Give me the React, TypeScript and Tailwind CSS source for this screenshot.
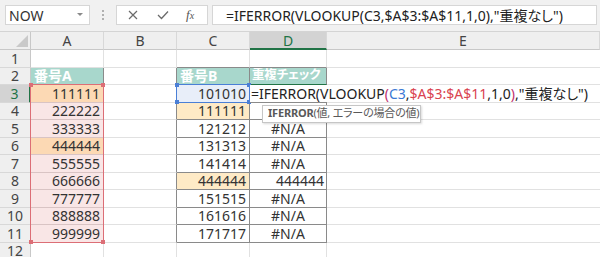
import React from "react";

const A_VALS = ["111111", "222222", "333333", "444444", "555555", "666666", "777777", "888888", "999999"];
const C_VALS = ["101010", "111111", "121212", "131313", "141414", "444444", "151515", "161616", "171717"];

function RowHead({ n }: { n: number }) {
  const active = n === 3;
  return (
    <div
      className={
        "flex items-center justify-center border-b border-[#d8d8d8] text-[14px] " +
        (active
          ? "bg-[#d3d3d3] text-[#217346] border-r-2 border-r-[#217346]"
          : "bg-[#efefef] text-[#444] border-r border-r-[#c8c8c8]")
      }
    >
      {n}
    </div>
  );
}

function ColHead({ label, active }: { label: string; active?: boolean }) {
  return (
    <div
      className={
        "flex items-center justify-center border-r border-[#d8d8d8] text-[14px] " +
        (active
          ? "bg-[#d3d3d3] text-[#217346] border-b-2 border-b-[#217346]"
          : "bg-[#efefef] text-[#444] border-b border-b-[#c8c8c8]")
      }
    >
      {label}
    </div>
  );
}

function Corner({ className }: { className: string }) {
  return <div className={"absolute w-[4px] h-[4px] " + className} />;
}

export default function App() {
  const rows: React.ReactNode[] = [];
  for (let r = 1; r <= 12; r++) {
    rows.push(<RowHead key={"h" + r} n={r} />);
    // Column A
    if (r === 2) {
      rows.push(
        <div key={"a" + r} className="flex items-center pl-[3px] bg-[#a8d7cc] text-white font-bold text-[14px] border-r border-r-[#8a8a8a] border-b border-b-[#e1e1e1]">
          番号A
        </div>
      );
    } else if (r >= 3 && r <= 11) {
      const orange = r === 3 || r === 6;
      rows.push(
        <div
          key={"a" + r}
          className={
            "flex items-center justify-end pr-[3px] text-[14px] text-[#333] border-r border-b border-[#d9c4c4] " +
            (orange ? "bg-[#fcd9b4]" : "bg-[#f9e6e6]") +
            (r === 3 ? " relative z-10" : "")
          }
        >
          {A_VALS[r - 3]}
          {r === 3 && (
            <div className="absolute -left-px -top-px -right-px h-[158.5px] border border-[#dc6e76] pointer-events-none">
              <Corner className="-left-[2px] -top-[2px] bg-[#dc6e76]" />
              <Corner className="-right-[2px] -top-[2px] bg-[#dc6e76]" />
              <Corner className="-left-[2px] -bottom-[2px] bg-[#dc6e76]" />
              <Corner className="-right-[2px] -bottom-[2px] bg-[#dc6e76]" />
            </div>
          )}
        </div>
      );
    } else {
      rows.push(<div key={"a" + r} className="border-r border-b border-[#e1e1e1] bg-white" />);
    }
    // Column B
    rows.push(
      <div
        key={"b" + r}
        className={
          "bg-white border-b border-b-[#e1e1e1] border-r " +
          (r >= 2 && r <= 11 ? "border-r-[#8a8a8a]" : "border-r-[#e1e1e1]")
        }
      />
    );
    // Column C
    if (r === 2) {
      rows.push(
        <div key={"c" + r} className="flex items-center pl-[3px] bg-[#a8d7cc] text-white font-bold text-[14px] border-r border-b border-[#8a8a8a]">
          番号B
        </div>
      );
    } else if (r >= 3 && r <= 11) {
      const bg = r === 3 ? "bg-[#e8eef9]" : r === 4 || r === 8 ? "bg-[#feeac6]" : "bg-white";
      rows.push(
        <div
          key={"c" + r}
          className={
            "flex items-center justify-end pr-[3px] text-[14px] text-[#333] border-r border-b border-[#8a8a8a] " +
            bg +
            (r === 3 ? " relative z-10" : "")
          }
        >
          {C_VALS[r - 3]}
          {r === 3 && (
            <div className="absolute -left-px -top-px -right-px -bottom-px border border-[#4a7fd6] pointer-events-none">
              <Corner className="-left-[2px] -top-[2px] bg-[#4a7fd6]" />
              <Corner className="-right-[2px] -top-[2px] bg-[#4a7fd6]" />
              <Corner className="-left-[2px] -bottom-[2px] bg-[#4a7fd6]" />
              <Corner className="-right-[2px] -bottom-[2px] bg-[#4a7fd6]" />
            </div>
          )}
        </div>
      );
    } else {
      rows.push(
        <div
          key={"c" + r}
          className={"bg-white border-r border-r-[#e1e1e1] border-b " + (r === 1 ? "border-b-[#8a8a8a]" : "border-b-[#e1e1e1]")}
        />
      );
    }
    // Column D
    if (r === 2) {
      rows.push(
        <div key={"d" + r} className="flex items-center pl-[2px] bg-[#a8d7cc] text-white font-bold text-[12.5px] tracking-[-0.2px] whitespace-nowrap overflow-hidden border-r border-r-[#8a8a8a] border-b border-b-[#217346]">
          重複チェック
        </div>
      );
    } else if (r === 3) {
      rows.push(
        <div key={"d" + r} className="relative z-20 flex items-center pl-[1px] bg-white text-[14px] text-[#222] whitespace-nowrap overflow-visible border-b border-[#8a8a8a]">
          <span>
            =IFERROR(VLOOKUP<span className="text-[#c0306e]">(</span>
            <span className="text-[#3a78d4]">C3</span>,<span className="text-[#d9434f]">$A$3:$A$11</span>,1,0
            <span className="text-[#c0306e]">)</span>,"重複なし")
          </span>
        </div>
      );
    } else if (r >= 4 && r <= 11) {
      let content: React.ReactNode = null;
      let align = "justify-center";
      if (r === 8) {
        content = "444444";
        align = "justify-end pr-[2px]";
      } else if (r !== 4) {
        content = "#N/A";
      }
      rows.push(
        <div key={"d" + r} className={"relative flex items-center text-[14px] text-[#333] bg-white border-r border-b border-[#8a8a8a] " + align}>
          {content}
          {r === 4 && (
            <div className="absolute z-30 left-[12px] top-[2px] w-[159px] h-[18px] bg-white border border-[#c6c6c6] shadow-[1px_1px_2px_rgba(0,0,0,0.15)] flex items-center pl-[5px] text-[11px] tracking-[-0.2px] text-[#595959] whitespace-nowrap overflow-hidden">
              <span className="font-bold">IFERROR</span>(値, エラーの場合の値)
            </div>
          )}
        </div>
      );
    } else {
      rows.push(
        <div
          key={"d" + r}
          className={"bg-white border-r border-r-[#e1e1e1] border-b " + (r === 1 ? "border-b-[#8a8a8a]" : "border-b-[#e1e1e1]")}
        />
      );
    }
    // Column E
    rows.push(<div key={"e" + r} className="bg-white border-b border-[#e1e1e1]" />);
  }

  return (
    <div className="w-[600px] h-[257px] overflow-hidden bg-white flex flex-col font-['Noto_Sans','Noto_Sans_CJK_JP',sans-serif] [font-feature-settings:'palt']">
      {/* Toolbar */}
      <div className="h-[32px] shrink-0 bg-[#f1f1f1] flex items-start pt-[5px] border-b border-[#d4d4d4]">
        <div className="ml-[5px] w-[85px] h-[20px] bg-white border border-[#d6d6d6] flex items-center pl-[3px] pr-[6px] text-[14px] text-[#333]">
          <span className="flex-1">NOW</span>
          <svg width="6" height="4" viewBox="0 0 6 4">
            <path d="M0 0 L6 0 L3 3 Z" fill="#8a8a8a" />
          </svg>
        </div>
        <div className="ml-[12px] mt-[5px] flex flex-col gap-[2px]">
          <div className="w-[2px] h-[2px] bg-[#b0b0b0]" />
          <div className="w-[2px] h-[2px] bg-[#b0b0b0]" />
          <div className="w-[2px] h-[2px] bg-[#b0b0b0]" />
        </div>
        <div className="ml-[12px] w-[92px] h-[20px] bg-white border border-[#d6d6d6] flex items-center">
          <svg className="ml-[11px]" width="10" height="10" viewBox="0 0 10 10">
            <path d="M1 1 L9 9 M9 1 L1 9" stroke="#6a6a6a" strokeWidth="1.2" fill="none" />
          </svg>
          <svg className="ml-[19px]" width="12" height="10" viewBox="0 0 12 10">
            <path d="M1 5 L4.5 8.5 L11 1.5" stroke="#6a6a6a" strokeWidth="1.3" fill="none" />
          </svg>
          <span className="ml-[17px] text-[13px] italic text-[#555] font-['Liberation_Serif',serif]">
            f<span className="text-[10px]">x</span>
          </span>
        </div>
        <div className="ml-[4px] mr-[3px] flex-1 h-[20px] bg-white border border-[#d6d6d6] flex items-center pl-[13px] text-[14px] text-[#222] whitespace-nowrap overflow-hidden">
          =IFERROR(VLOOKUP(C3,$A$3:$A$11,1,0),"重複なし")
        </div>
      </div>

      {/* Sheet */}
      <div className="flex-1 min-h-0 overflow-hidden grid grid-cols-[31px_73px_73px_73px_77px_1fr] grid-rows-[18px_repeat(12,17.5px)]">
        <div className="relative bg-[#efefef] border-r border-b border-[#c8c8c8]">
          <svg className="absolute right-[2px] bottom-[2px]" width="12" height="12" viewBox="0 0 12 12">
            <path d="M12 0 L12 12 L0 12 Z" fill="#c9c9c9" />
          </svg>
        </div>
        <ColHead label="A" />
        <ColHead label="B" />
        <ColHead label="C" />
        <ColHead label="D" active />
        <ColHead label="E" />
        {rows}
      </div>
    </div>
  );
}
